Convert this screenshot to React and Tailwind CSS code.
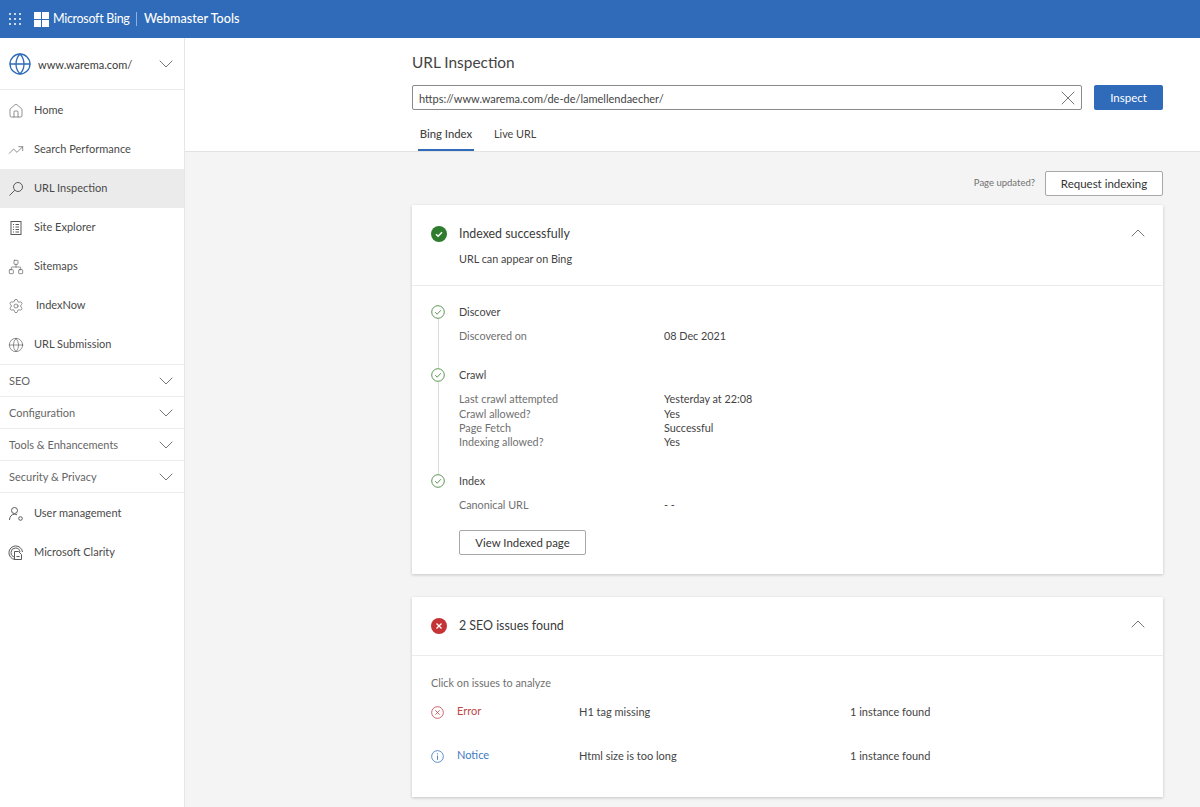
import { ChevronDown, ChevronUp, Globe, Home, TrendingUp, Network, Settings } from "lucide-react";
import { X } from "lucide-react";

const font = { fontFamily: 'Lato, "Noto Sans", sans-serif' };

const SearchIcon = ({ className }) => (
  <svg viewBox="0 0 16 16" fill="none" stroke="currentColor" strokeWidth="1" className={className}>
    <circle cx="10" cy="6" r="4.500" />
    <path d="M6.800 9.200L1.500 14.500" />
  </svg>
);

const SiteExplorerIcon = ({ className }) => (
  <svg viewBox="0 0 16 16" fill="none" stroke="currentColor" strokeWidth="1" className={className}>
    <rect x="3" y="1.5" width="10" height="13" />
    <path d="M5 4.5h1M7.5 4.5H11M5 7h1M7.5 7H11M5 9.5h1M7.5 9.5H11M5 12h1M7.5 12H11" />
  </svg>
);

const UserIcon = ({ className }) => (
  <svg viewBox="0 0 16 16" fill="none" stroke="currentColor" strokeWidth="1" className={className}>
    <circle cx="6.5" cy="4.5" r="3" />
    <path d="M1.5 14c0-3.2 2-5.8 5-5.8 1 0 1.800.3 2.500.7" />
    <circle cx="12.500" cy="12.500" r="1.800" />
  </svg>
);

const ClarityIcon = ({ className }) => (
  <svg viewBox="0 0 16 16" fill="none" stroke="currentColor" strokeWidth="1" className={className}>
    <path d="M7 14.500A6.800 6.800 0 1 1 14.500 7" />
    <path d="M7 12A4.500 4.500 0 1 1 12 7" />
    <path d="M6.500 6.500h4l3 3v5h-7z" />
    <path d="M8.500 11.500h3" />
  </svg>
);

const navTop = [
  { label: "Home", icon: Home },
  { label: "Search Performance", icon: TrendingUp },
  { label: "URL Inspection", icon: SearchIcon, active: true },
  { label: "Site Explorer", icon: SiteExplorerIcon },
  { label: "Sitemaps", icon: Network },
  { label: "IndexNow", icon: Settings, extra: "ml-[12px]" },
  { label: "URL Submission", icon: Globe },
];

const NavItem = ({ item }) => {
  const Icon = item.icon;
  return (
    <div className={`flex h-[39px] items-center pl-[8px] text-[11px] text-[#4a4a4a] ${item.active ? "bg-[#ebebeb]" : ""}`}>
      <Icon className="h-[16px] w-[16px] shrink-0 text-[#5a5a5a]" strokeWidth={1} />
      <span className={`pb-[1px] ${item.extra || "ml-[10px]"}`}>{item.label}</span>
    </div>
  );
};

const Sidebar = () => (
  <aside className="w-[185px] shrink-0 border-r border-[#e6e6e6] bg-white">
    <div className="flex h-[52px] items-center border-b border-[#ececec] pl-[8px] pr-[6px]">
      <Globe className="h-[24px] w-[24px] text-[#2f6bb8]" strokeWidth={1.3} />
      <span className="ml-[6px] flex-1 pt-[3px] text-[11px] text-[#3a3a3a]">www.warema.com/</span>
      <ChevronDown className="h-[24px] w-[24px] text-[#666666]" strokeWidth={0.9} />
    </div>
    <div className="border-b border-[#ececec] pt-[1px]">
      {navTop.map((item) => (
        <NavItem key={item.label} item={item} />
      ))}
    </div>
    {["SEO", "Configuration", "Tools & Enhancements", "Security & Privacy"].map((label) => (
      <div key={label} className="flex h-[32px] items-center justify-between border-b border-[#ececec] pl-[9px] pr-[6px] text-[11px] text-[#666666]">
        <span className="pt-[2px]">{label}</span>
        <ChevronDown className="h-[24px] w-[24px] text-[#666666]" strokeWidth={0.9} />
      </div>
    ))}
    <div className="pt-[1px]">
      <NavItem item={{ label: "User management", icon: UserIcon }} />
      <NavItem item={{ label: "Microsoft Clarity", icon: ClarityIcon }} />
    </div>
  </aside>
);

const StepCheck = () => (
  <svg viewBox="0 0 14 14" fill="none" className="h-[14px] w-[14px] shrink-0">
    <circle cx="7" cy="7" r="6.300" stroke="#4d8a45" strokeWidth="0.9" />
    <path d="M4.200 7.200l2 2 3.700-4" stroke="#4d8a45" strokeWidth="0.9" />
  </svg>
);

const Step = ({ title, rows, height, last, gap, children }) => (
  <div className="flex" style={height ? { height } : undefined}>
    <div className="flex w-[28px] shrink-0 flex-col items-center">
      <StepCheck />
      {!last && <div className="w-px flex-1 bg-[#dcdcdc]" />}
    </div>
    <div className="flex-1 pl-[7px]">
      <div className="flex h-[14px] items-center text-[10.800px] text-[#444444]">{title}</div>
      <div className={gap}>
        {rows.map(([k, v]) => (
          <div key={k} className="flex h-[14.400px] items-center text-[10.800px]">
            <span className="w-[205px] text-[#707070]">{k}</span>
            <span className="text-[#444444]">{v}</span>
          </div>
        ))}
      </div>
      {children}
    </div>
  </div>
);

const IssueRow = ({ icon, label, color, text, mb }) => (
  <div className={`flex h-[14px] items-center text-[11px] ${mb || ""}`}>
    <div className="w-[26px]">{icon}</div>
    <span className="w-[122px] -translate-y-[1px]" style={{ color }}>{label}</span>
    <span className="w-[271px] text-[#444444]">{text}</span>
    <span className="text-[#444444]">1 instance found</span>
  </div>
);

export default function App() {
  return (
    <div className="flex h-[807px] w-[1200px] flex-col overflow-hidden bg-[#f4f4f4]" style={font}>
      <header className="flex h-[38px] shrink-0 items-center bg-[#2f6bb8] pl-[9px] text-white">
        <svg viewBox="0 0 12 12" className="h-[12px] w-[12px]" fill="#ffffff">
          {[1, 6, 11].flatMap((y) => [1, 6, 11].map((x) => <circle key={`${x}-${y}`} cx={x} cy={y} r="1" />))}
        </svg>
        <svg viewBox="0 0 15 15" className="ml-[13px] h-[15px] w-[15px]" fill="#ffffff">
          <rect width="7" height="7" />
          <rect x="8" width="7" height="7" />
          <rect y="8" width="7" height="7" />
          <rect x="8" y="8" width="7" height="7" />
        </svg>
        <span className="ml-[4px] w-[75px] whitespace-nowrap text-[12.500px] tracking-[-0.3px]">Microsoft Bing</span>
        <div className="ml-[8px] h-[14px] w-px bg-[#8fb2dd]" />
        <span className="ml-[7px] text-[12.600px] font-medium">Webmaster Tools</span>
      </header>
      <div className="flex flex-1">
        <Sidebar />
        <main className="flex-1">
          <div className="h-[114px] border-b border-[#e2e2e2] bg-white pl-[227px] pr-[37px]">
            <h1 className="flex h-[47px] items-center pt-[2px] text-[15.400px] font-normal text-[#444444]">URL Inspection</h1>
            <div className="flex gap-[12px]">
              <div className="flex h-[25px] flex-1 items-center justify-between rounded-[2px] border border-[#8a8a8a] pl-[6px] pr-[1px] text-[11px] text-[#444444]">
                <span className="pt-[3px]">https://www.warema.com/de-de/lamellendaecher/</span>
                <X className="h-[24px] w-[24px] text-[#666666]" strokeWidth={0.9} />
              </div>
              <button className="h-[25px] w-[69px] rounded-[2px] bg-[#2f6bb8] text-[11.500px] text-white">Inspect</button>
            </div>
            <div className="mt-[14px] flex text-[10.800px] text-[#444444]">
              <div className="ml-[6px] flex h-[27px] w-[56px] items-start justify-center border-b-2 border-[#2f6bb8] pt-[2px] text-[11.300px] font-medium">Bing Index</div>
              <div className="ml-[20px] flex pt-[2px]">Live URL</div>
            </div>
          </div>
          <div className="pl-[227px] pr-[37px] pt-[19px]">
            <div className="flex h-[25px] items-center justify-end gap-[10px]">
              <span className="text-[9.500px] text-[#707070]">Page updated?</span>
              <button className="h-[25px] w-[118px] rounded-[2px] border border-[#a8a8a8] bg-white text-[11.500px] text-[#333333]">Request indexing</button>
            </div>
            <section className="mt-[9px] h-[369px] bg-white shadow-[0_1px_3px_rgba(0,0,0,0.2)]">
              <div className="relative h-[81px] border-b border-[#ececec] pl-[19px]">
                <div className="flex h-[58px] items-center">
                  <svg viewBox="0 0 16 16" className="h-[16px] w-[16px]">
                    <circle cx="8" cy="8" r="8" fill="#2e7d2e" />
                    <path d="M5 8.200l2.100 2L11 6.200" stroke="#fff" strokeWidth="1.500" fill="none" />
                  </svg>
                  <span className="ml-[12px] pt-[1px] text-[12.400px] text-[#3a3a3a]">Indexed successfully</span>
                </div>
                <div className="ml-[28px] -mt-[11px] text-[10.800px] leading-[14px] text-[#444444]">URL can appear on Bing</div>
                <ChevronUp className="absolute right-[13px] top-[16px] h-[24px] w-[24px] text-[#666666]" strokeWidth={0.9} />
              </div>
              <div className="pl-[12px] pt-[19px]">
                <Step title="Discover" height={63} gap="mt-[10px]" rows={[["Discovered on", "08 Dec 2021"]]} />
                <Step title="Crawl" height={106} gap="mt-[10px]" rows={[["Last crawl attempted", "Yesterday at 22:08"], ["Crawl allowed?", "Yes"], ["Page Fetch", "Successful"], ["Indexing allowed?", "Yes"]]} />
                <Step title="Index" last gap="mt-[10px]" rows={[["Canonical URL", "- -"]]}>
                  <button className="mt-[18px] h-[25px] w-[127px] rounded-[2px] border border-[#a8a8a8] bg-white text-[11.400px] text-[#333333]">View Indexed page</button>
                </Step>
              </div>
            </section>
            <section className="mt-[23px] h-[200px] bg-white pl-[19px] shadow-[0_1px_3px_rgba(0,0,0,0.2)]">
              <div className="relative -ml-[19px] flex h-[59px] items-center border-b border-[#ececec] pl-[19px]">
                <svg viewBox="0 0 16 16" className="h-[16px] w-[16px]">
                  <circle cx="8" cy="8" r="8" fill="#c43335" />
                  <path d="M5.500 5.500l5 5M10.500 5.500l-5 5" stroke="#fff" strokeWidth="1.300" />
                </svg>
                <span className="ml-[12px] pt-[1px] text-[12.400px] text-[#3a3a3a]">2 SEO issues found</span>
                <ChevronUp className="absolute right-[13px] top-[15px] h-[24px] w-[24px] text-[#666666]" strokeWidth={0.9} />
              </div>
              <div className="mt-[19px] text-[10.800px] leading-[16px] text-[#707070]">Click on issues to analyze</div>
              <div className="mt-[14px]">
                <IssueRow
                  label="Error"
                  color="#c0474a"
                  text="H1 tag missing"
                  mb="mb-[30px]"
                  icon={
                    <svg viewBox="0 0 14 14" fill="none" className="h-[13px] w-[13px]">
                      <circle cx="7" cy="7" r="6.300" stroke="#c0474a" strokeWidth="0.900" />
                      <path d="M4.700 4.700l4.600 4.600M9.300 4.700l-4.600 4.600" stroke="#c0474a" strokeWidth="0.900" />
                    </svg>
                  }
                />
                <IssueRow
                  label="Notice"
                  color="#3f78c0"
                  text="Html size is too long"
                  icon={
                    <svg viewBox="0 0 14 14" fill="none" className="h-[13px] w-[13px]">
                      <circle cx="7" cy="7" r="6.300" stroke="#3f78c0" strokeWidth="0.900" />
                      <path d="M7 6v4.500M7 3.500v1.200" stroke="#3f78c0" strokeWidth="1" />
                    </svg>
                  }
                />
              </div>
            </section>
          </div>
        </main>
      </div>
    </div>
  );
}
